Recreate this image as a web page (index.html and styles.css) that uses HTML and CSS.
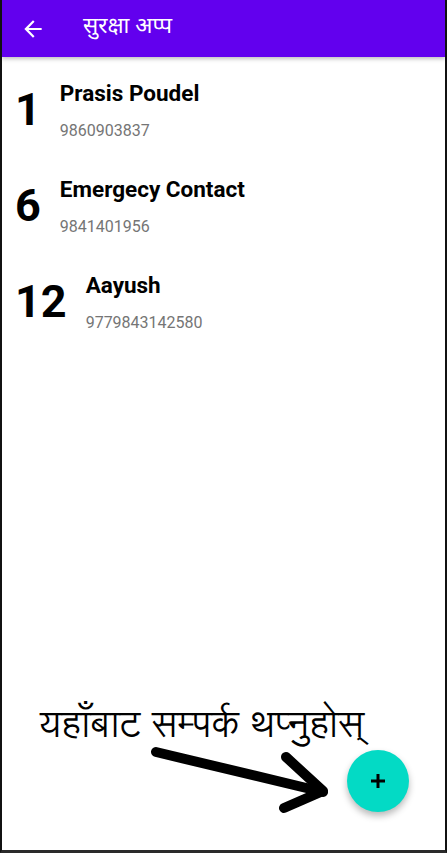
FILE: index.html
```html
<!DOCTYPE html>
<html lang="ne">
<head>
<meta charset="utf-8">
<title>सुरक्षा अप्प</title>
<link rel="stylesheet" href="styles.css">
</head>
<body>
<div class="screen">
  <header class="appbar">
    <svg class="back" viewBox="0 0 24 24" width="26" height="26"><path d="M20 11H7.83l5.59-5.59L12 4l-8 8 8 8 1.41-1.41L7.83 13H20v-2z" fill="#fff"/></svg>
    <span class="title">सुरक्षा अप्प</span>
  </header>
  <main class="list">
    <div class="item">
      <span class="num">1</span>
      <div class="info">
        <div class="name">Prasis Poudel</div>
        <div class="phone">9860903837</div>
      </div>
    </div>
    <div class="item">
      <span class="num">6</span>
      <div class="info">
        <div class="name">Emergecy Contact</div>
        <div class="phone">9841401956</div>
      </div>
    </div>
    <div class="item">
      <span class="num">12</span>
      <div class="info">
        <div class="name">Aayush</div>
        <div class="phone">9779843142580</div>
      </div>
    </div>
  </main>
  <div class="hint">यहाँबाट सम्पर्क थप्नुहोस्</div>
  <svg class="hint-arrow" viewBox="0 0 447 853" width="447" height="853"><g fill="none" stroke="#000" stroke-width="10" stroke-linecap="round" stroke-linejoin="round"><path d="M156 752 L323 792"/><path d="M286 757 L323 791 L284 808"/></g></svg>
  <button class="fab" aria-label="add"><svg viewBox="0 0 14 14" width="14" height="14"><path d="M7 0v14M0 7h14" stroke="#000" stroke-width="3"/></svg></button>
</div>
</body>
</html>
```
FILE: styles.css
```css
html, body {
  margin: 0;
  padding: 0;
  background: #fff;
}
.screen {
  position: relative;
  width: 447px;
  height: 853px;
  box-sizing: border-box;
  border-left: 2px solid #111;
  border-right: 2px solid #111;
  border-bottom: 3px solid #2a2a2a;
  overflow: hidden;
  font-family: Roboto, "Noto Sans", sans-serif;
}
.appbar {
  height: 57px;
  background: #6200ee;
  display: flex;
  align-items: center;
  padding-left: 18px;
  box-shadow: 0 2px 4px rgba(0,0,0,0.25);
  position: relative;
  z-index: 1;
}
.back {
  display: block;
}
.title {
  color: #fff;
  font-size: 22.5px;
  margin-left: 37px;
  margin-top: -2px;
  font-family: "Noto Sans Devanagari", "Lohit Devanagari", "Noto Sans", sans-serif;
}
.list {
  padding-top: 25px;
}
.item {
  display: flex;
  height: 96px;
  align-items: flex-start;
}
.num {
  font-size: 45px;
  font-weight: bold;
  color: #000;
  padding-left: 13px;
  margin-top: 2px;
  margin-right: 19px;
  line-height: 52px;
}
.info {
  display: flex;
  flex-direction: column;
}
.name {
  font-size: 22.5px;
  font-weight: bold;
  color: #000;
  line-height: 26px;
  margin-top: -2px;
}
.phone {
  font-size: 16px;
  color: #757575;
  margin-top: 15px;
  line-height: 20px;
}
.hint {
  position: absolute;
  left: 38px;
  top: 691px;
  font-size: 37.3px;
  color: #000;
  font-family: "Lohit Devanagari", "Noto Serif Devanagari", "Noto Sans Devanagari", serif;
  white-space: nowrap;
}
.hint-arrow {
  position: absolute;
  left: -2px;
  top: 0;
  pointer-events: none;
}
.fab {
  position: absolute;
  left: 345px;
  top: 750px;
  width: 62px;
  height: 62px;
  border-radius: 50%;
  border: none;
  padding: 0;
  background: #03dac5;
  display: flex;
  align-items: center;
  justify-content: center;
  box-shadow: 0 4px 7px rgba(0,0,0,0.28);
}
.fab svg {
  display: block;
}
```
